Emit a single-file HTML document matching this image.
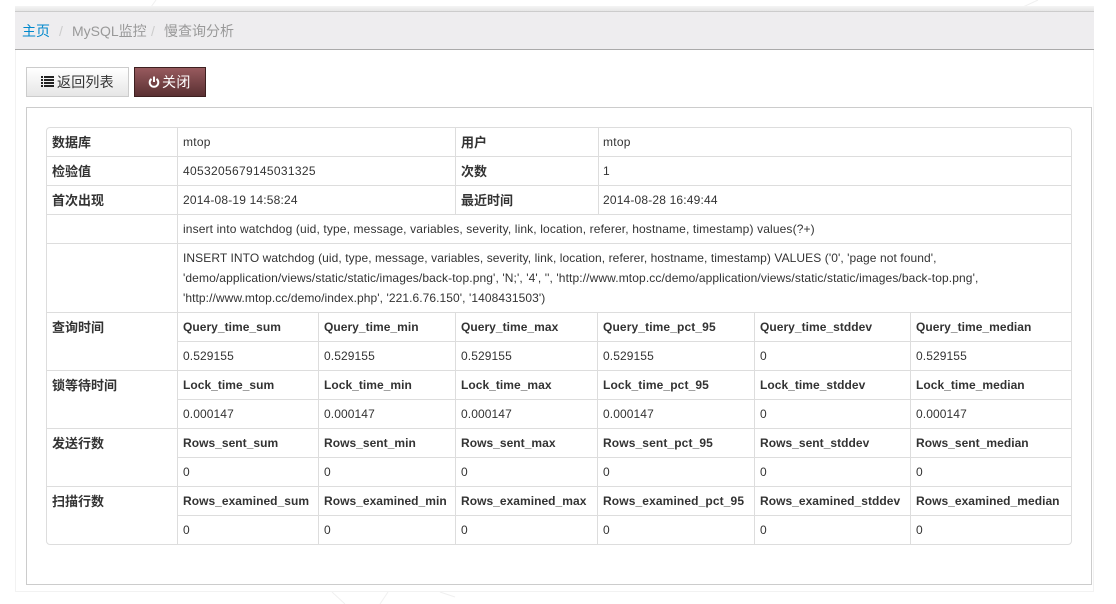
<!DOCTYPE html>
<html><head><meta charset="utf-8"><style>
html,body{margin:0;padding:0;background:#fff}
body{width:1116px;height:604px;position:relative;overflow:hidden;font:12px/20px "Liberation Sans","Noto Sans CJK SC",sans-serif;color:#333}
div{position:absolute;box-sizing:border-box}
.t,.b,.c{white-space:nowrap;height:20px}
.b{font-weight:bold;letter-spacing:.04px}
.c{font-weight:bold;font-size:13px;margin-top:1px}
.n{letter-spacing:.1px}
.p{letter-spacing:.12px}
.h{background:#ddd;height:1px}
.v{background:#ddd;width:1px}
</style></head><body>
<svg style="position:absolute;left:0;top:0" width="1116" height="604" fill="none" stroke="#f0f0f0"><path d="M156 0L151 7M1038 0L1023 7M332 592L345 604M388 592L380 604M440 592L455 597"/></svg>
<div style="left:15px;top:6px;width:1079px;height:586px;background:#fff;border:1px solid #f2f2f2;border-top:0"></div>
<div style="left:15px;top:6px;width:1079px;height:6px;background:linear-gradient(#f4f4f4,#e6e6e6);border-bottom:1px solid #ccc"></div>
<div style="left:15px;top:12px;width:1079px;height:38px;background:#eeedef;border-bottom:1px solid #aaa"></div>
<div class="t" style="left:22px;top:21px;font-size:14px;color:#08c">主页</div>
<div class="t" style="left:59px;top:21px;font-size:14px;color:#ccc">/</div>
<div class="t" style="left:72px;top:21px;font-size:14px;color:#999">MySQL监控</div>
<div class="t" style="left:151px;top:21px;font-size:14px;color:#ccc">/</div>
<div class="t" style="left:164px;top:21px;font-size:14px;color:#999">慢查询分析</div>

<div style="left:26px;top:67px;width:103px;height:30px;background:linear-gradient(#fff,#e6e6e6);border:1px solid #ccc"></div>
<svg style="position:absolute;left:41px;top:76px" width="13" height="11"><path d="M0 0h2v2H0zM3 0h10v2H3zM0 3h2v2H0zM3 3h10v2H3zM0 6h2v2H0zM3 6h10v2H3zM0 9h2v2H0zM3 9h10v2H3z" fill="#222"/></svg>
<div class="t" style="left:57px;top:72px;font-size:14px;letter-spacing:.2px;color:#333">返回列表</div>
<div style="left:134px;top:67px;width:72px;height:30px;background:linear-gradient(#975a5e,#5a3032);border:1px solid #3d2020"></div>
<svg style="position:absolute;left:148px;top:76px" width="12" height="12" fill="none" stroke="#fff" stroke-width="2"><path d="M3.500 3A4.300 4.300 0 1 0 8.500 3M6 0.500V6"/></svg>
<div class="t" style="left:162px;top:72px;font-size:14px;letter-spacing:.4px;color:#fff">关闭</div>

<div style="left:26px;top:107px;width:1066px;height:478px;border:1px solid #ccc"></div>
<div style="left:46px;top:127px;width:1026px;height:418px;border:1px solid #ddd;border-radius:4px"></div>

<div class="h" style="left:47px;top:156px;width:1024px"></div>
<div class="h" style="left:47px;top:185px;width:1024px"></div>
<div class="h" style="left:47px;top:214px;width:1024px"></div>
<div class="h" style="left:47px;top:243px;width:1024px"></div>
<div class="h" style="left:47px;top:312px;width:1024px"></div>
<div class="h" style="left:177px;top:341px;width:894px"></div>
<div class="h" style="left:47px;top:370px;width:1024px"></div>
<div class="h" style="left:177px;top:399px;width:894px"></div>
<div class="h" style="left:47px;top:428px;width:1024px"></div>
<div class="h" style="left:177px;top:457px;width:894px"></div>
<div class="h" style="left:47px;top:486px;width:1024px"></div>
<div class="h" style="left:177px;top:515px;width:894px"></div>

<div class="v" style="left:177px;top:128px;height:416px"></div>
<div class="v" style="left:455px;top:128px;height:87px"></div>
<div class="v" style="left:598px;top:128px;height:87px"></div>
<div class="v" style="left:318px;top:312px;height:232px"></div>
<div class="v" style="left:455px;top:312px;height:232px"></div>
<div class="v" style="left:597px;top:312px;height:232px"></div>
<div class="v" style="left:754px;top:312px;height:232px"></div>
<div class="v" style="left:910px;top:312px;height:232px"></div>

<div class="c" style="left:52px;top:132px">数据库</div><div class="t" style="left:183px;top:132px;letter-spacing:.25px">mtop</div><div class="c" style="left:461px;top:132px">用户</div><div class="t" style="left:603px;top:132px;letter-spacing:.25px">mtop</div>
<div class="c" style="left:52px;top:161px">检验值</div><div class="t" style="left:183px;top:161px;letter-spacing:.32px">4053205679145031325</div><div class="c" style="left:461px;top:161px">次数</div><div class="t" style="left:603px;top:161px">1</div>
<div class="c" style="left:52px;top:190px">首次出现</div><div class="t" style="left:183px;top:190px;letter-spacing:.17px">2014-08-19 14:58:24</div><div class="c" style="left:461px;top:190px">最近时间</div><div class="t" style="left:603px;top:190px;letter-spacing:.17px">2014-08-28 16:49:44</div>
<div class="t" style="left:183px;top:219px;letter-spacing:.135px">insert into watchdog (uid, type, message, variables, severity, link, location, referer, hostname, timestamp) values(?+)</div>
<div class="t" style="left:183px;top:248px;letter-spacing:.08px">INSERT INTO watchdog (uid, type, message, variables, severity, link, location, referer, hostname, timestamp) VALUES ('0', 'page not found',</div>
<div class="t" style="left:183px;top:268px;letter-spacing:.11px">'demo/application/views/static/static/images/back-top.png', 'N;', '4', '', 'http://www.mtop.cc/demo/application/views/static/static/images/back-top.png',</div>
<div class="t" style="left:183px;top:288px;letter-spacing:.075px">'http://www.mtop.cc/demo/index.php', '221.6.76.150', '1408431503')</div>

<div class="c" style="left:52px;top:317px">查询时间</div>
<div class="b" style="left:183px;top:317px">Query_time_sum</div><div class="b" style="left:324px;top:317px">Query_time_min</div><div class="b" style="left:461px;top:317px">Query_time_max</div><div class="b p" style="left:603px;top:317px">Query_time_pct_95</div><div class="b" style="left:760px;top:317px">Query_time_stddev</div><div class="b" style="left:916px;top:317px">Query_time_median</div>
<div class="t n" style="left:183px;top:346px">0.529155</div><div class="t n" style="left:324px;top:346px">0.529155</div><div class="t n" style="left:461px;top:346px">0.529155</div><div class="t n" style="left:603px;top:346px">0.529155</div><div class="t" style="left:760px;top:346px">0</div><div class="t n" style="left:916px;top:346px">0.529155</div>

<div class="c" style="left:52px;top:375px">锁等待时间</div>
<div class="b" style="left:183px;top:375px">Lock_time_sum</div><div class="b" style="left:324px;top:375px">Lock_time_min</div><div class="b" style="left:461px;top:375px">Lock_time_max</div><div class="b p" style="left:603px;top:375px">Lock_time_pct_95</div><div class="b" style="left:760px;top:375px">Lock_time_stddev</div><div class="b" style="left:916px;top:375px">Lock_time_median</div>
<div class="t n" style="left:183px;top:404px">0.000147</div><div class="t n" style="left:324px;top:404px">0.000147</div><div class="t n" style="left:461px;top:404px">0.000147</div><div class="t n" style="left:603px;top:404px">0.000147</div><div class="t" style="left:760px;top:404px">0</div><div class="t n" style="left:916px;top:404px">0.000147</div>

<div class="c" style="left:52px;top:433px">发送行数</div>
<div class="b" style="left:183px;top:433px">Rows_sent_sum</div><div class="b" style="left:324px;top:433px">Rows_sent_min</div><div class="b" style="left:461px;top:433px">Rows_sent_max</div><div class="b p" style="left:603px;top:433px">Rows_sent_pct_95</div><div class="b" style="left:760px;top:433px">Rows_sent_stddev</div><div class="b" style="left:916px;top:433px">Rows_sent_median</div>
<div class="t" style="left:183px;top:462px">0</div><div class="t" style="left:324px;top:462px">0</div><div class="t" style="left:461px;top:462px">0</div><div class="t" style="left:603px;top:462px">0</div><div class="t" style="left:760px;top:462px">0</div><div class="t" style="left:916px;top:462px">0</div>

<div class="c" style="left:52px;top:491px">扫描行数</div>
<div class="b" style="left:183px;top:491px">Rows_examined_sum</div><div class="b" style="left:324px;top:491px">Rows_examined_min</div><div class="b" style="left:461px;top:491px">Rows_examined_max</div><div class="b p" style="left:603px;top:491px">Rows_examined_pct_95</div><div class="b" style="left:760px;top:491px">Rows_examined_stddev</div><div class="b" style="left:916px;top:491px">Rows_examined_median</div>
<div class="t" style="left:183px;top:520px">0</div><div class="t" style="left:324px;top:520px">0</div><div class="t" style="left:461px;top:520px">0</div><div class="t" style="left:603px;top:520px">0</div><div class="t" style="left:760px;top:520px">0</div><div class="t" style="left:916px;top:520px">0</div>
</body></html>
